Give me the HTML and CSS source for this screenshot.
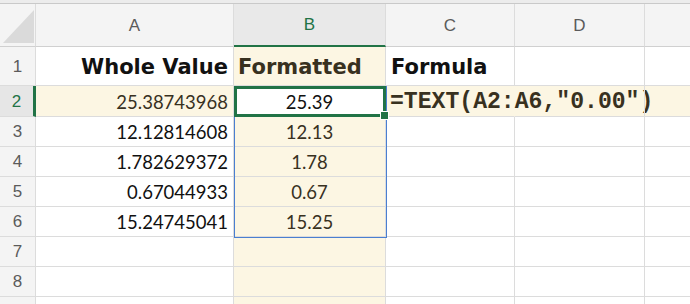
FILE: index.html
```html
<!DOCTYPE html>
<html>
<head>
  <meta charset="UTF-8">
  <link rel="stylesheet" href="styles.css">
</head>
<body>
  <div class="sheet">
    <div class="topbar"></div>

    <!-- column headers -->
    <div class="row head-row">
      <div class="corner"><span class="corner-tri"></span></div>
      <div class="col-head">A</div>
      <div class="col-head active">B</div>
      <div class="col-head">C</div>
      <div class="col-head">D</div>
      <div class="col-head"></div>
    </div>

    <div class="row first">
      <div class="row-head">1</div>
      <div class="cell right bold">Whole Value</div>
      <div class="cell tint bold">Formatted</div>
      <div class="cell bold">Formula</div>
      <div class="cell"></div>
      <div class="cell"></div>
    </div>

    <div class="row sel-row">
      <div class="row-head active">2</div>
      <div class="cell right">25.38743968</div>
      <div class="cell center current">25.39</div>
      <div class="cell formula no-line">=TEXT(A2:A6,"0.00")</div>
      <div class="cell"></div>
      <div class="cell"></div>
    </div>

    <div class="row">
      <div class="row-head">3</div>
      <div class="cell right">12.12814608</div>
      <div class="cell tint center">12.13</div>
      <div class="cell"></div>
      <div class="cell"></div>
      <div class="cell"></div>
    </div>

    <div class="row">
      <div class="row-head">4</div>
      <div class="cell right">1.782629372</div>
      <div class="cell tint center">1.78</div>
      <div class="cell"></div>
      <div class="cell"></div>
      <div class="cell"></div>
    </div>

    <div class="row">
      <div class="row-head">5</div>
      <div class="cell right">0.67044933</div>
      <div class="cell tint center">0.67</div>
      <div class="cell"></div>
      <div class="cell"></div>
      <div class="cell"></div>
    </div>

    <div class="row">
      <div class="row-head">6</div>
      <div class="cell right">15.24745041</div>
      <div class="cell tint center">15.25</div>
      <div class="cell"></div>
      <div class="cell"></div>
      <div class="cell"></div>
    </div>

    <div class="row">
      <div class="row-head">7</div>
      <div class="cell"></div>
      <div class="cell tint"></div>
      <div class="cell"></div>
      <div class="cell"></div>
      <div class="cell"></div>
    </div>

    <div class="row">
      <div class="row-head">8</div>
      <div class="cell"></div>
      <div class="cell tint"></div>
      <div class="cell"></div>
      <div class="cell"></div>
      <div class="cell"></div>
    </div>

    <div class="row">
      <div class="row-head"></div>
      <div class="cell"></div>
      <div class="cell tint"></div>
      <div class="cell"></div>
      <div class="cell"></div>
      <div class="cell"></div>
    </div>

    <!-- selection overlays -->
    <div class="range"></div>
    <div class="active-cell"></div>
    <div class="fill-handle"></div>
  </div>
</body>
</html>
```

FILE: styles.css
```css
/* base */
body {
  margin: 0;
  background: #fff;
  font-family: Lato, "Open Sans", sans-serif;
  overflow: hidden;
}

.sheet {
  position: relative;
  width: 690px;
  height: 304px;
  overflow: hidden;
}

.topbar {
  height: 3px;
  background: #ececec;
  border-bottom: 1px solid #c9c9c9;
}

.row {
  display: grid;
  grid-template-columns: 36px 198px 152px 129px 130px 130px;
  height: 30px;
}

.row > div {
  box-sizing: border-box;
  border-right: 1px solid #dcdcdc;
  border-bottom: 1px solid #dcdcdc;
  display: flex;
  align-items: center;
  white-space: nowrap;
}

.head-row { height: 43px; }
.row.first { height: 39px; }
.row.sel-row { height: 31px; background: #fcf6e3; }

/* headers */
.corner,
.col-head,
.row-head {
  background: #f4f4f4;
  color: #5b5b5b;
  font-family: "Liberation Sans", Arial, sans-serif;
  font-size: 17px;
  justify-content: center;
}

.head-row > div { border-bottom-color: #d0d0d0; padding-top: 1px; }

.corner { position: relative; }

.corner-tri {
  position: absolute;
  left: 3px;
  top: 6px;
  width: 31px;
  height: 33px;
  background: #dadada;
  clip-path: polygon(100% 0, 100% 100%, 0 100%);
}

.col-head.active {
  background: #e9e9e9;
  color: #217346;
  border-bottom: 2px solid #217346;
}

.row-head { padding-top: 1px; }

.row-head.active {
  background: #e6e6e6;
  color: #217346;
  border-right: 3px solid #217346;
}

/* cells */
.cell {
  font-size: 18.5px;
  color: #111;
  padding: 1px 5px 0;
}

.cell.tint { background: #fcf6e3; color: #38311f; }
.sel-row .cell { color: #38311f; }
.sel-row .cell.current { background: #fff; color: #111; }

.right { justify-content: flex-end; }
.center { justify-content: center; }

.bold {
  font-family: "DejaVu Sans", Verdana, sans-serif;
  font-weight: 700;
  font-size: 21px;
  padding-top: 2px;
}

.cell.right.bold { padding-right: 5px; }
.cell.tint.bold { padding-left: 4px; }

.formula {
  font-family: "Liberation Mono", "Courier New", monospace;
  font-weight: 700;
  font-size: 23.1px;
  overflow: visible;
  padding-left: 4px;
}

.cell.no-line { border-right-color: transparent; }

/* selection */
.range {
  position: absolute;
  left: 234px;
  top: 86px;
  width: 153px;
  height: 152px;
  box-sizing: border-box;
  border: 1px solid #4a7fd1;
}

.active-cell {
  position: absolute;
  left: 234px;
  top: 86px;
  width: 152px;
  height: 31px;
  box-sizing: border-box;
  border: 3px solid #217346;
}

.fill-handle {
  position: absolute;
  left: 381px;
  top: 112px;
  width: 7px;
  height: 7px;
  background: #217346;
  outline: 1px solid #fff;
}
```
